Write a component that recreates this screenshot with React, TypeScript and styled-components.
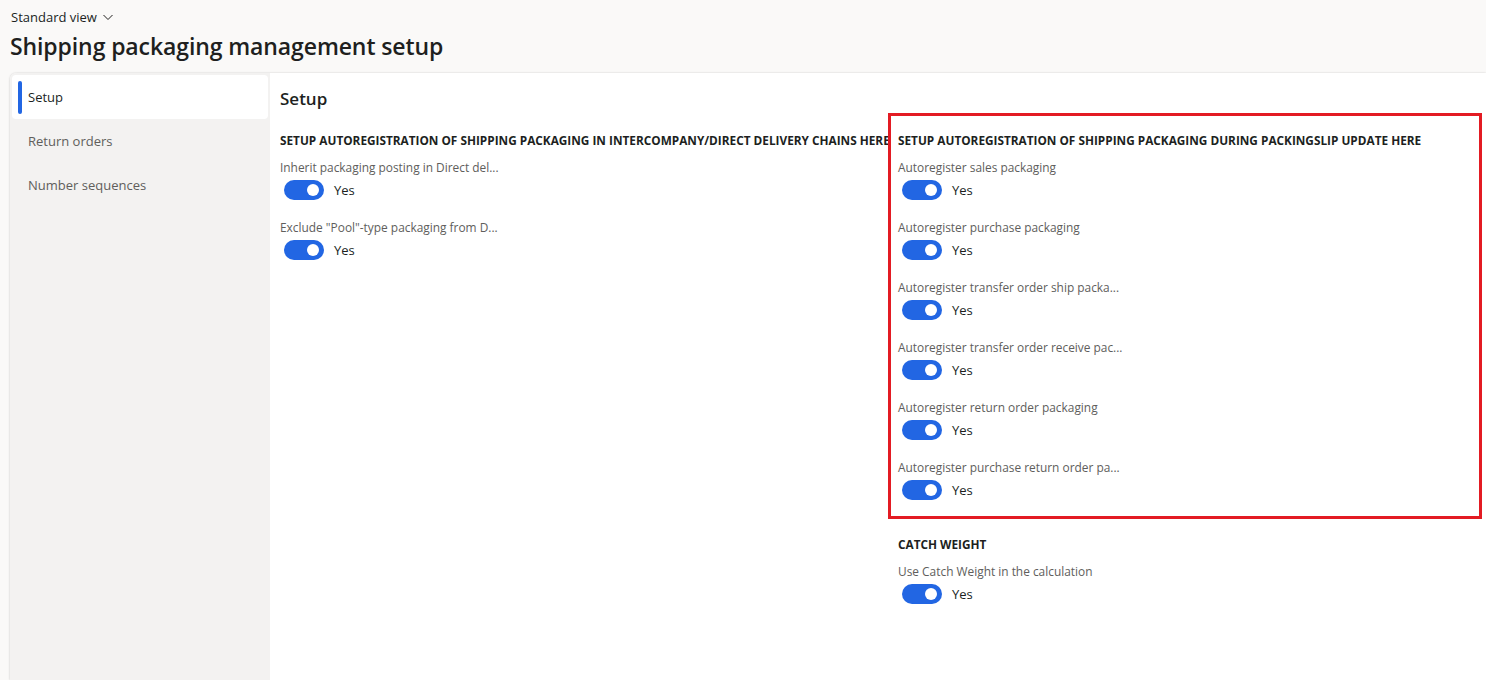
import styled, { createGlobalStyle } from "styled-components";

const GlobalStyle = createGlobalStyle`
  html, body {
    margin: 0;
    padding: 0;
    background: #faf9f8;
    font-family: "Segoe UI", "Open Sans", "Noto Sans", sans-serif;
    color: #201f1e;
  }
`;

const Page = styled.div`
  height: 680px;
  display: flex;
  flex-direction: column;
  overflow: hidden;
`;

const Header = styled.div`
  padding: 6px 0 0 11px;
  height: 73px;
  box-sizing: border-box;
`;

const ViewPicker = styled.div`
  display: flex;
  align-items: center;
  gap: 5px;
  font-size: 13px;
  height: 22px;
  color: #201f1e;
  svg {
    margin-top: -1px;
  }
`;

const Title = styled.h1`
  margin: 2px 0 0 -1px;
  font-size: 23px;
  font-weight: 600;
  line-height: 32px;
  letter-spacing: -0.1px;
`;

const Workspace = styled.div`
  flex: 1;
  margin-left: 10px;
  display: grid;
  grid-template-columns: 260px 1fr;
  background: #fff;
  border-top-left-radius: 6px;
  box-shadow: 0 0 2px rgba(0, 0, 0, 0.18), 0 1px 3px rgba(0, 0, 0, 0.06);
  position: relative;
`;

const Nav = styled.nav`
  background: #f3f2f1;
  border-top-left-radius: 6px;
  padding: 2px 2px 0 2px;
  display: flex;
  flex-direction: column;
`;

const NavItem = styled.div<{ $active?: boolean }>`
  position: relative;
  height: 44px;
  display: flex;
  align-items: center;
  padding-left: 16px;
  font-size: 13px;
  border-radius: 4px;
  background: ${(p) => (p.$active ? "#fff" : "transparent")};
  color: ${(p) => (p.$active ? "#201f1e" : "#605e5c")};
  &::before {
    content: "";
    display: ${(p) => (p.$active ? "block" : "none")};
    position: absolute;
    left: 6px;
    top: 6px;
    bottom: 5px;
    width: 4px;
    border-radius: 2px;
    background: #2266e3;
  }
`;

const Content = styled.main`
  padding: 10px 0 0 10px;
  overflow: hidden;
`;

const SectionTitle = styled.h2`
  margin: 0;
  font-size: 17px;
  font-weight: 600;
  line-height: 32px;
`;

const Columns = styled.div`
  margin-top: 16px;
  display: grid;
  grid-template-columns: 618px 1fr;
`;

const Column = styled.div`
  display: flex;
  flex-direction: column;
`;

const Group = styled.section`
  display: flex;
  flex-direction: column;
  & + & {
    margin-top: 16px;
  }
`;

const GroupTitle = styled.h3`
  margin: 0 0 10px 0;
  font-size: 11.8px;
  font-weight: 700;
  line-height: 18px;
  white-space: nowrap;
  text-transform: uppercase;
`;

const Field = styled.div`
  height: 60px;
  display: flex;
  flex-direction: column;
`;

const Label = styled.div`
  font-size: 11.9px;
  line-height: 16px;
  height: 16px;
  color: #605e5c;
`;

const ToggleRow = styled.div`
  display: flex;
  align-items: center;
  gap: 10px;
  margin-top: 5px;
  padding-left: 4px;
  font-size: 13px;
  color: #201f1e;
`;

const Toggle = styled.span<{ $on: boolean }>`
  width: 40px;
  height: 20px;
  border-radius: 10px;
  background: ${(p) => (p.$on ? "#2266e3" : "#fff")};
  position: relative;
  flex-shrink: 0;
  &::after {
    content: "";
    position: absolute;
    top: 4px;
    left: ${(p) => (p.$on ? "23px" : "4px")};
    width: 12px;
    height: 12px;
    border-radius: 50%;
    background: #fff;
  }
`;

const Highlight = styled.div`
  position: absolute;
  left: 878px;
  top: 40px;
  width: 594px;
  height: 406px;
  box-sizing: border-box;
  border: 3px solid #e31b23;
  pointer-events: none;
`;

type tField = { label: string; on: boolean };

const Chevron = () => (
  <svg width="12" height="12" viewBox="0 0 12 12" fill="none">
    <path d="M1.5 4L6 8.5L10.5 4" stroke="#201f1e" strokeWidth="1" />
  </svg>
);

function FieldToggle({ label, on }: tField) {
  return (
    <Field>
      <Label>{label}</Label>
      <ToggleRow>
        <Toggle $on={on} />
        <span>{on ? "Yes" : "No"}</span>
      </ToggleRow>
    </Field>
  );
}

const leftFields: tField[] = [
  { label: "Inherit packaging posting in Direct del...", on: true },
  { label: "Exclude \"Pool\"-type packaging from D...", on: true },
];

const rightFields: tField[] = [
  { label: "Autoregister sales packaging", on: true },
  { label: "Autoregister purchase packaging", on: true },
  { label: "Autoregister transfer order ship packa...", on: true },
  { label: "Autoregister transfer order receive pac...", on: true },
  { label: "Autoregister return order packaging", on: true },
  { label: "Autoregister purchase return order pa...", on: true },
];

export default function App() {
  return (
    <Page>
      <GlobalStyle />
      <Header>
        <ViewPicker>
          Standard view <Chevron />
        </ViewPicker>
        <Title>Shipping packaging management setup</Title>
      </Header>
      <Workspace>
        <Nav>
          <NavItem $active>Setup</NavItem>
          <NavItem>Return orders</NavItem>
          <NavItem>Number sequences</NavItem>
        </Nav>
        <Content>
          <SectionTitle>Setup</SectionTitle>
          <Columns>
            <Column>
              <Group>
                <GroupTitle>
                  Setup autoregistration of shipping packaging in intercompany/direct delivery chains here
                </GroupTitle>
                {leftFields.map((f) => (
                  <FieldToggle key={f.label} {...f} />
                ))}
              </Group>
            </Column>
            <Column>
              <Group>
                <GroupTitle>Setup autoregistration of shipping packaging during packingslip update here</GroupTitle>
                {rightFields.map((f) => (
                  <FieldToggle key={f.label} {...f} />
                ))}
              </Group>
              <Group>
                <GroupTitle>Catch weight</GroupTitle>
                <FieldToggle label="Use Catch Weight in the calculation" on />
              </Group>
            </Column>
          </Columns>
        </Content>
        <Highlight />
      </Workspace>
    </Page>
  );
}
